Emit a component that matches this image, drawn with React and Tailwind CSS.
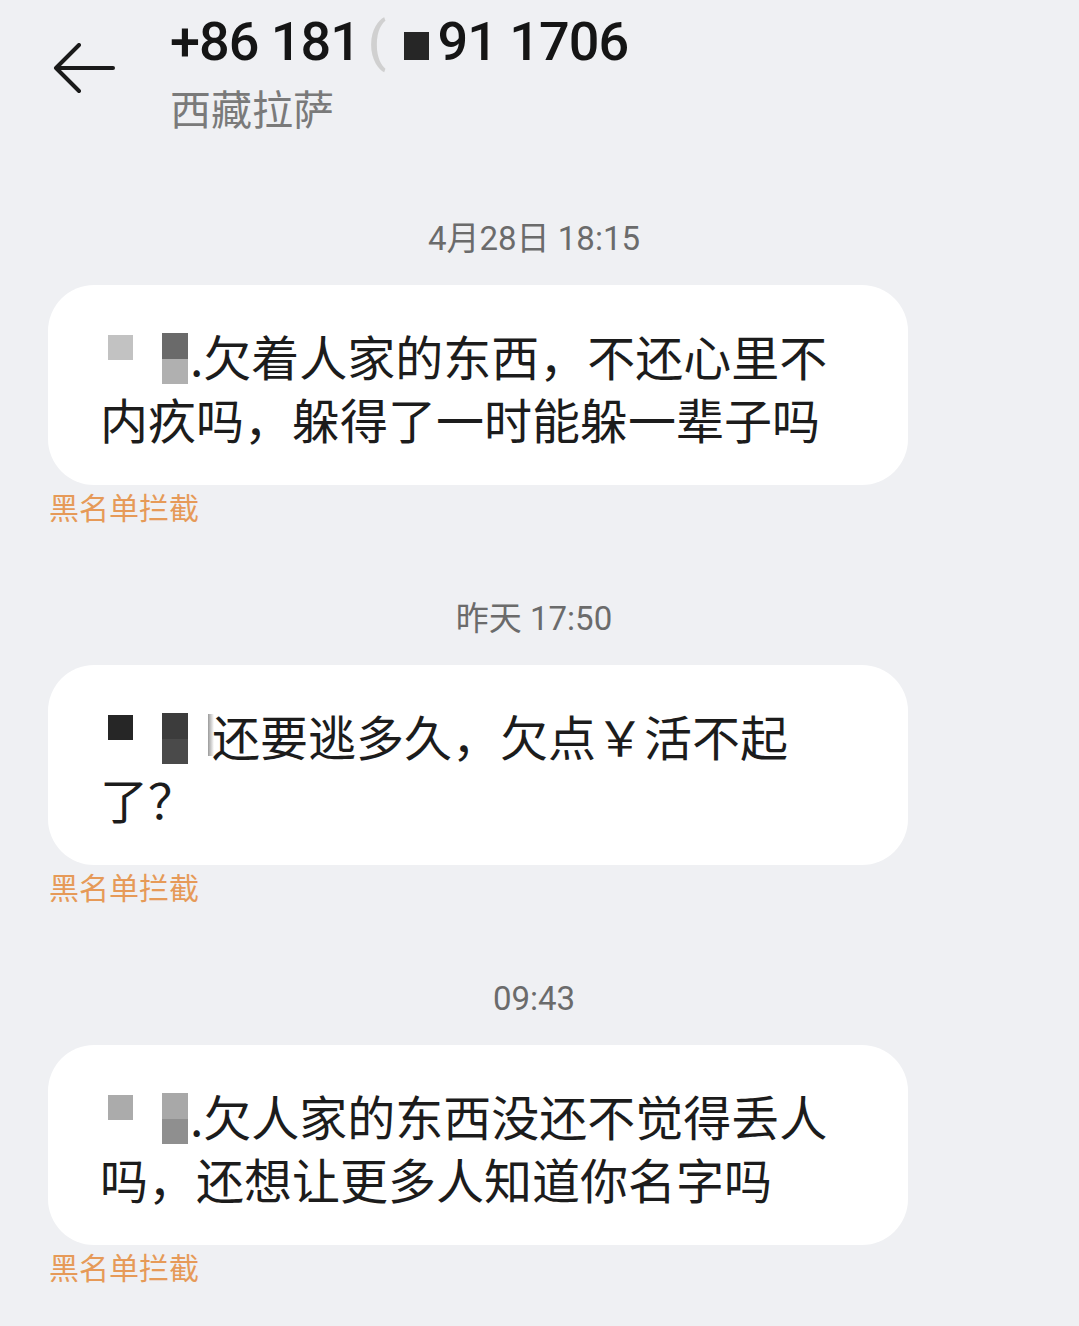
import React from "react";

const cjk = "font-['Roboto','Noto_Sans_CJK_SC',sans-serif]";

const BackArrow = () => (
  <svg width="64" height="52" viewBox="0 0 64 52" fill="none" stroke="#1a1a1a" strokeWidth="4" strokeLinecap="round" strokeLinejoin="round">
    <path d="M60 25H4" />
    <path d="M26 2L3 25L26 48" />
  </svg>
);

const Blocks = ({ square, top, bottom }) => (
  <>
    <div className={`ml-[8px] mt-[11px] w-[25px] h-[25px] shrink-0 ${square}`} />
    <div className="ml-[29px] mt-[9px] w-[26px] h-[51px] shrink-0 flex flex-col">
      <div className={`flex-1 ${top}`} />
      <div className={`flex-1 ${bottom}`} />
    </div>
  </>
);

const Timestamp = ({ children }) => (
  <div className={`pr-[11px] text-center text-[33px] leading-[40px] text-[#6b6b6b] ${cjk}`}>
    {children}
  </div>
);

const Message = ({ first, second }) => (
  <div className="mx-[48px] mt-[26px] w-[860px] rounded-[46px] bg-white pl-[52px] pr-[30px] pt-[39px] pb-[35px] text-[48px] leading-[63px] text-[#1c1c1c] font-['Noto_Sans_CJK_SC',sans-serif]">
    <div className="flex items-start whitespace-nowrap">{first}</div>
    <div className="whitespace-nowrap">{second}</div>
  </div>
);

const Blocked = () => (
  <div className="ml-[49px] mt-[6px] text-[30px] leading-[30px] text-[#e69a58] font-['Noto_Sans_CJK_SC',sans-serif]">
    黑名单拦截
  </div>
);

export default function App() {
  return (
    <div className="min-h-[1326px] w-[1079px] bg-[#eff0f3] overflow-hidden">
      <div className="flex items-start">
        <div className="pl-[53px] pt-[43px]">
          <BackArrow />
        </div>
        <div className="ml-[53px] pt-[12px]">
          <div className="flex items-center h-[60px] text-[54px] leading-[60px] font-medium tracking-[-1px] text-[#151515] font-['Roboto',sans-serif]">
            <span>+86 181</span>
            <span className="ml-[8px] text-[#d0d0d0]">(</span>
            <span className="ml-[18px] mt-[8px] w-[25px] h-[28px] bg-[#262626]" />
            <span className="ml-[9px]">91 1706</span>
          </div>
          <div className="mt-[10px] text-[41px] leading-[50px] text-[#7a7a7a] font-['Noto_Sans_CJK_SC',sans-serif]">
            西藏拉萨
          </div>
        </div>
      </div>

      <div className="mt-[87px]">
        <Timestamp>4月28日 18:15</Timestamp>
        <Message
          first={
            <>
              <Blocks square="bg-[#c2c2c2]" top="bg-[#6a6a6a]" bottom="bg-[#b0b0b0]" />
              <span className="ml-[2px]">.欠着人家的东西，不还心里不</span>
            </>
          }
          second="内疚吗，躲得了一时能躲一辈子吗"
        />
        <Blocked />
      </div>

      <div className="mt-[78px]">
        <Timestamp>昨天 17:50</Timestamp>
        <Message
          first={
            <>
              <Blocks square="bg-[#262626]" top="bg-[#3c3c3c]" bottom="bg-[#4a4a4a]" />
              <div className="ml-[20px] mt-[10px] w-[6px] h-[42px] shrink-0 bg-gradient-to-r from-[#9a9a9a] to-transparent" />
              <span className="-ml-[2px]">还要逃多久，欠点￥活不起</span>
            </>
          }
          second="了？"
        />
        <Blocked />
      </div>

      <div className="mt-[78px]">
        <Timestamp>09:43</Timestamp>
        <Message
          first={
            <>
              <Blocks square="bg-[#ababab]" top="bg-[#a8a8a8]" bottom="bg-[#8f8f8f]" />
              <span className="ml-[2px]">.欠人家的东西没还不觉得丢人</span>
            </>
          }
          second="吗，还想让更多人知道你名字吗"
        />
        <Blocked />
      </div>
    </div>
  );
}
